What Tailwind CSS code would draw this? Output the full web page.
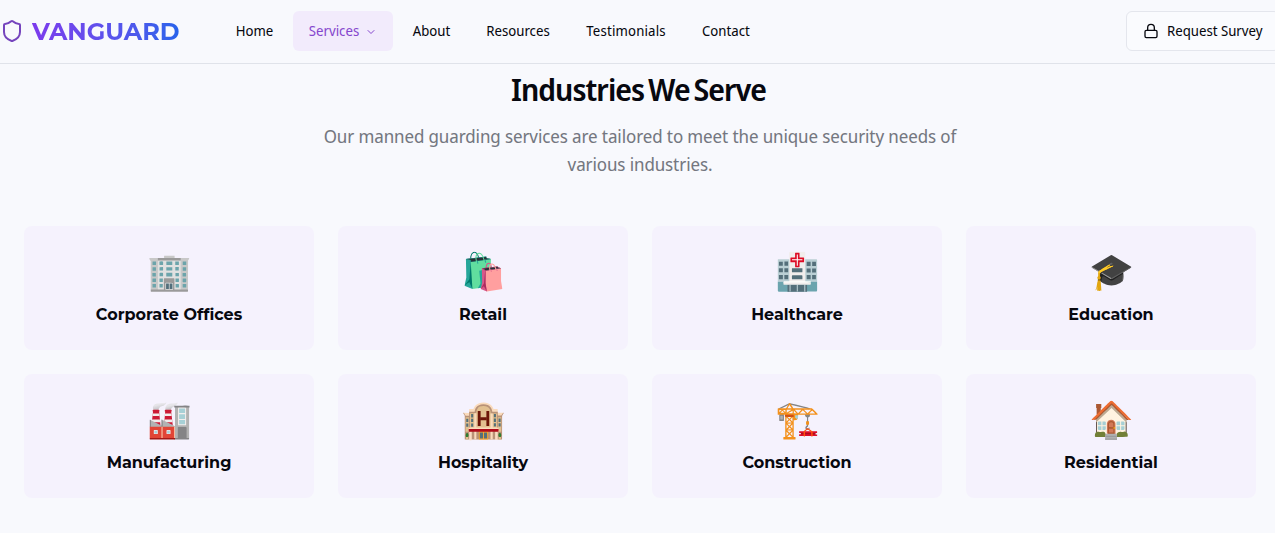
<!DOCTYPE html>
<html lang="en">
<head>
<meta charset="utf-8">
<title>Vanguard</title>
<script src="https://cdn.jsdelivr.net/npm/@tailwindcss/browser@4"></script>
</head>
<body class="h-[533px] overflow-hidden bg-[#f8f9fd] text-[#07080f] font-['Noto_Sans_Display','Noto_Sans',sans-serif]">
<header class="flex h-16 items-center border-b border-[#e0e3ea] pb-px">
  <div class="flex w-[220px] shrink-0 items-center gap-2">
    <svg class="size-6 shrink-0" viewBox="0 0 24 24" fill="none" stroke="#7544bd" stroke-width="2" stroke-linecap="round" stroke-linejoin="round"><path d="M20 13c0 5-3.500 7.500-7.660 8.950a1 1 0 0 1-.67-.01C7.500 20.500 4 18 4 13V6a1 1 0 0 1 1-1c2 0 4.500-1.200 6.240-2.720a1.170 1.170 0 0 1 1.520 0C14.510 3.810 17 5 19 5a1 1 0 0 1 1 1z"/></svg>
    <span class="mt-0.5 bg-gradient-to-r from-[#7c3aed] to-[#2563eb] bg-clip-text font-['Montserrat',sans-serif] text-2xl font-bold text-transparent">VANGUARD</span>
  </div>
  <nav class="flex items-center gap-1 text-sm whitespace-nowrap">
    <a class="flex h-10 w-[69px] items-center justify-center">Home</a>
    <a class="flex h-10 w-[100px] items-center justify-center gap-1 rounded-md bg-[#f2ebfc] text-[#8648ce]">Services
      <svg class="mt-0.5 ml-0.5 size-3" viewBox="0 0 24 24" fill="none" stroke="currentColor" stroke-width="2" stroke-linecap="round" stroke-linejoin="round"><path d="m6 9 6 6 6-6"/></svg></a>
    <a class="flex h-10 w-[69px] items-center justify-center">About</a>
    <a class="flex h-10 w-[96px] items-center justify-center">Resources</a>
    <a class="flex h-10 w-[112px] items-center justify-center tracking-[0.15px]">Testimonials</a>
    <a class="flex h-10 w-[80px] items-center justify-center">Contact</a>
  </nav>
  <button class="ml-auto -mr-[5px] flex h-10 w-[154px] shrink-0 items-center gap-2 rounded-md border border-[#e4e6ed] bg-[#fafbfe] pl-4 text-sm whitespace-nowrap">
    <svg class="size-4 shrink-0" viewBox="0 0 24 24" fill="none" stroke="currentColor" stroke-width="2" stroke-linecap="round" stroke-linejoin="round"><rect width="18" height="11" x="3" y="11" rx="2"/><path d="M7 11V7a5 5 0 0 1 10 0v4"/></svg>
    Request Survey
  </button>
</header>
<main class="w-[1280px] px-6 pt-2">
  <div class="mx-auto w-[672px] text-center">
    <h2 class="pr-[3px] text-3xl font-semibold tracking-[-0.95px] [word-spacing:-2.5px]">Industries We Serve</h2>
    <p class="mt-[14px] text-lg leading-7 tracking-[-0.11px] text-[#747780]">Our manned guarding services are tailored to meet the unique security needs of various industries.</p>
  </div>
  <div class="mt-12 grid grid-cols-[repeat(4,290px)] gap-6 text-center font-['Montserrat',sans-serif] font-bold">
    <div class="h-[124px] rounded-lg bg-[#f5f2fd] px-6 pt-[25px]"><div class="mb-3 text-4xl">🏢</div><h3>Corporate Offices</h3></div>
    <div class="h-[124px] rounded-lg bg-[#f5f2fd] px-6 pt-[25px]"><div class="mb-3 text-4xl">🛍️</div><h3>Retail</h3></div>
    <div class="h-[124px] rounded-lg bg-[#f5f2fd] px-6 pt-[25px]"><div class="mb-3 text-4xl">🏥</div><h3>Healthcare</h3></div>
    <div class="h-[124px] rounded-lg bg-[#f5f2fd] px-6 pt-[25px]"><div class="mb-3 text-4xl">🎓</div><h3>Education</h3></div>
    <div class="h-[124px] rounded-lg bg-[#f5f2fd] px-6 pt-[25px]"><div class="mb-3 text-4xl">🏭</div><h3>Manufacturing</h3></div>
    <div class="h-[124px] rounded-lg bg-[#f5f2fd] px-6 pt-[25px]"><div class="mb-3 text-4xl">🏨</div><h3>Hospitality</h3></div>
    <div class="h-[124px] rounded-lg bg-[#f5f2fd] px-6 pt-[25px]"><div class="mb-3 text-4xl">🏗️</div><h3>Construction</h3></div>
    <div class="h-[124px] rounded-lg bg-[#f5f2fd] px-6 pt-[25px]"><div class="mb-3 text-4xl">🏠</div><h3>Residential</h3></div>
  </div>
</main>
</body>
</html>
